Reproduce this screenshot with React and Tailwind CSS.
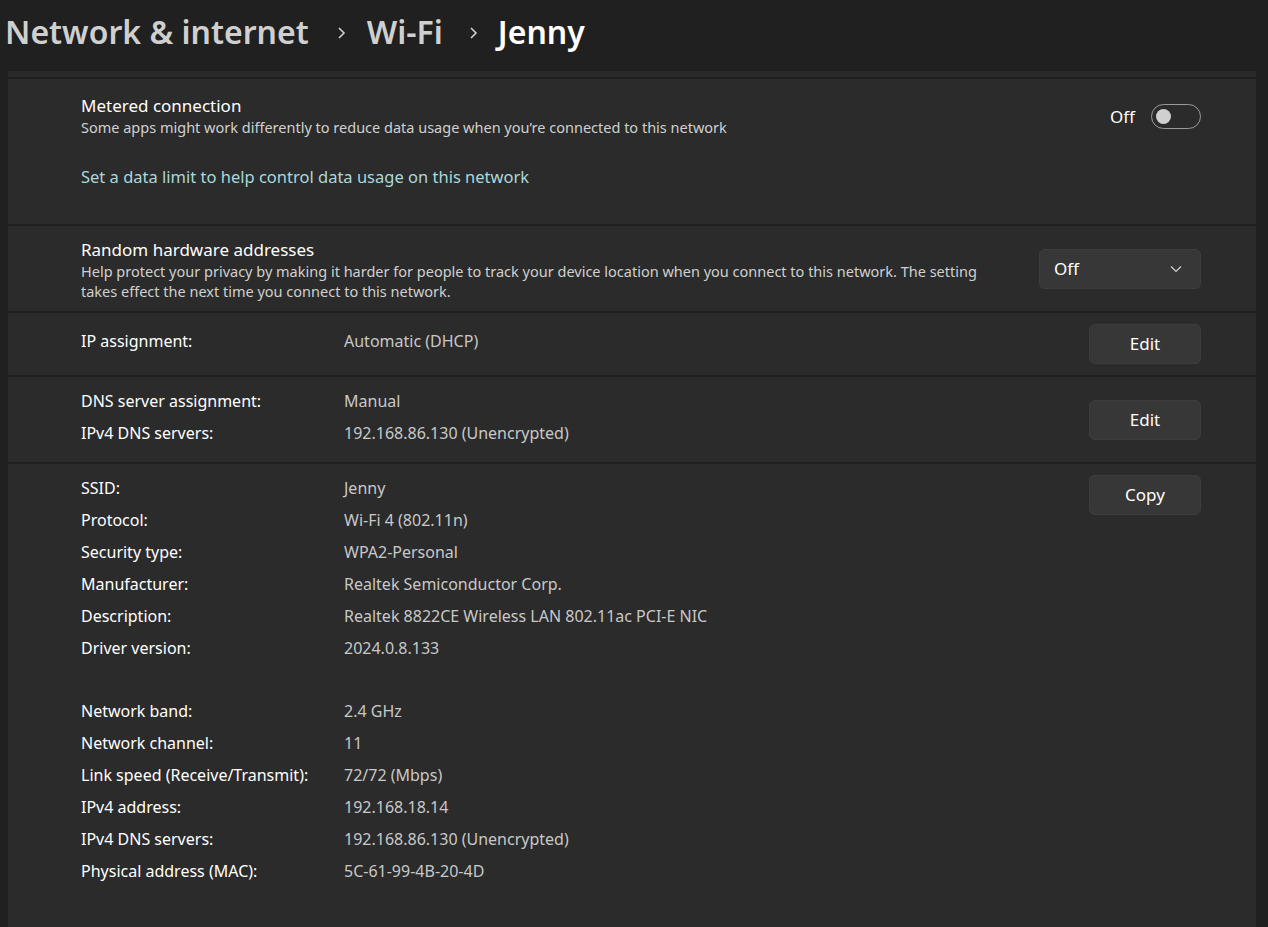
import React from "react";

const font = { fontFamily: '"Noto Sans", "Open Sans", sans-serif' };

const Btn = ({ children }) => (
  <button className="w-[112px] h-[40px] rounded-[6px] bg-[#373737] border border-[#3d3d3d] text-[17px] text-white">
    {children}
  </button>
);

const Row = ({ label, value }) => (
  <div className="flex h-[32px] items-center text-[16px]">
    <div className="w-[263px] text-white">{label}</div>
    <div className="text-[#c8c8c8]">{value}</div>
  </div>
);

const Chevron = () => (
  <svg width="10" height="14" viewBox="0 0 10 14" fill="none" className="mt-[2px]">
    <path d="M3 2 L8 7 L3 12" stroke="#cfcfcf" strokeWidth="1.6" />
  </svg>
);

const props1 = [
  ["SSID:", "Jenny"],
  ["Protocol:", "Wi-Fi 4 (802.11n)"],
  ["Security type:", "WPA2-Personal"],
  ["Manufacturer:", "Realtek Semiconductor Corp."],
  ["Description:", "Realtek 8822CE Wireless LAN 802.11ac PCI-E NIC"],
  ["Driver version:", "2024.0.8.133"],
];

const props2 = [
  ["Network band:", "2.4 GHz"],
  ["Network channel:", "11"],
  ["Link speed (Receive/Transmit):", "72/72 (Mbps)"],
  ["IPv4 address:", "192.168.18.14"],
  ["IPv4 DNS servers:", "192.168.86.130 (Unencrypted)"],
  ["Physical address (MAC):", "5C-61-99-4B-20-4D"],
];

export default function App() {
  return (
    <div style={font} className="w-[1268px] h-[927px] bg-[#202020] overflow-hidden text-[17px]">
      <div className="h-[71px] flex items-center pl-[5px] pb-[8px] text-[32px] font-semibold">
        <span className="text-[#cfcfcf]">Network &amp; internet</span>
        <span className="ml-[27px] mr-[21px] flex"><Chevron /></span>
        <span className="text-[#cfcfcf]">Wi-Fi</span>
        <span className="ml-[25px] mr-[20px] flex"><Chevron /></span>
        <span className="text-white">Jenny</span>
      </div>

      <div className="ml-[8px] w-[1248px] h-[856px] bg-[#2b2b2b] flex flex-col">
        <div className="h-[6px] bg-[#2a2a2a] border-b-2 border-[#1f1f1f] box-content" />

        {/* metered */}
        <div className="h-[147px] border-b-2 border-[#1f1f1f] pl-[73px] pr-[55px] pt-[16px] flex flex-col">
          <div className="flex items-start justify-between">
            <div>
              <div className="text-white leading-[22px]">Metered connection</div>
              <div className="text-[#d0d0d0] text-[14.5px] leading-[20px]">
                Some apps might work differently to reduce data usage when you’re connected to this network
              </div>
            </div>
            <div className="flex items-center gap-[16px] pt-[9px]">
              <span className="text-white">Off</span>
              <div className="w-[50px] h-[25px] rounded-full border border-[#9a9a9a] flex items-center px-[4px]">
                <div className="w-[15px] h-[15px] rounded-full bg-[#d0d0d0]" />
              </div>
            </div>
          </div>
          <div className="mt-[28px] text-[#a8d8dc] text-[16.5px] leading-[24px]">
            Set a data limit to help control data usage on this network
          </div>
        </div>

        {/* random hw */}
        <div className="h-[87px] border-b-2 border-[#1f1f1f] pl-[73px] pr-[55px] pt-[13px] flex justify-between items-start">
          <div className="w-[920px]">
            <div className="text-white leading-[22px]">Random hardware addresses</div>
            <div className="text-[#d0d0d0] text-[14.5px] leading-[20px]">
              Help protect your privacy by making it harder for people to track your device location when you connect to this network. The setting takes effect the next time you connect to this network.
            </div>
          </div>
          <div className="mt-[10px] w-[162px] h-[40px] rounded-[6px] bg-[#373737] border border-[#3d3d3d] flex items-center justify-between pl-[14px] pr-[18px]">
            <span className="text-white">Off</span>
            <svg width="12" height="8" viewBox="0 0 12 8" fill="none">
              <path d="M1 1.5 L6 6.5 L11 1.5" stroke="#d0d0d0" strokeWidth="1.2" />
            </svg>
          </div>
        </div>

        {/* IP */}
        <div className="h-[64px] border-b-2 border-[#1f1f1f] pl-[73px] pr-[55px] flex items-center justify-between">
          <div className="flex -mt-[6px] text-[16px]">
            <div className="w-[263px] text-white">IP assignment:</div>
            <div className="text-[#c8c8c8]">Automatic (DHCP)</div>
          </div>
          <Btn>Edit</Btn>
        </div>

        {/* DNS */}
        <div className="h-[87px] border-b-2 border-[#1f1f1f] pl-[73px] pr-[55px] pt-[8px] flex justify-between items-start">
          <div>
            <Row label="DNS server assignment:" value="Manual" />
            <Row label="IPv4 DNS servers:" value="192.168.86.130 (Unencrypted)" />
          </div>
          <div className="pt-[15px]">
            <Btn>Edit</Btn>
          </div>
        </div>

        {/* properties */}
        <div className="pl-[73px] pr-[55px] pt-[8px] flex justify-between items-start">
          <div>
            {props1.map(([l, v]) => (
              <Row key={l} label={l} value={v} />
            ))}
            <div className="h-[31px]" />
            {props2.map(([l, v]) => (
              <Row key={l} label={l} value={v} />
            ))}
          </div>
          <div className="pt-[3px]">
            <Btn>Copy</Btn>
          </div>
        </div>
      </div>
    </div>
  );
}
